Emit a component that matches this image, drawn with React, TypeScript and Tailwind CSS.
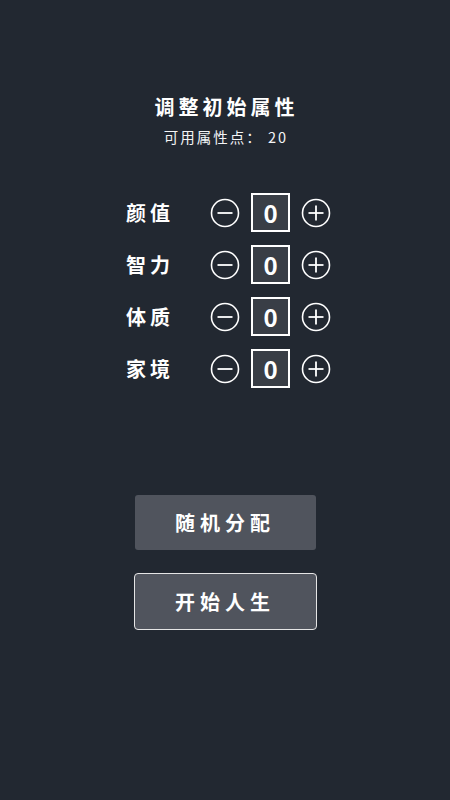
import React, { useState } from 'react';

const FONT = { fontFamily: '"Noto Sans CJK SC", "Noto Sans", sans-serif' };

const MinusIcon = () => (
  <svg width="30" height="30" viewBox="0 0 30 30" fill="none">
    <circle cx="15" cy="15" r="13.5" stroke="white" strokeWidth="1.6" />
    <line x1="7.5" y1="15" x2="22.5" y2="15" stroke="white" strokeWidth="1.8" />
  </svg>
);

const PlusIcon = () => (
  <svg width="30" height="30" viewBox="0 0 30 30" fill="none">
    <circle cx="15" cy="15" r="13.5" stroke="white" strokeWidth="1.6" />
    <line x1="7.5" y1="15" x2="22.5" y2="15" stroke="white" strokeWidth="1.8" />
    <line x1="15" y1="7.5" x2="15" y2="22.5" stroke="white" strokeWidth="1.8" />
  </svg>
);

const attrs = ['颜值', '智力', '体质', '家境'];

export default function App() {
  const [values] = useState([0, 0, 0, 0]);

  return (
    <div className="w-[450px] h-[800px] bg-[#222831] text-white flex flex-col items-center" style={FONT}>
      {/* Header */}
      <h1 className="mt-[93px] pl-[3px] text-[20px] font-bold tracking-[4px] leading-[28px]">调整初始属性</h1>
      <p className="mt-[6px] pl-[2px] text-[14.5px] tracking-[2px] leading-[20px] text-gray-100">可用属性点： 20</p>

      {/* Attributes */}
      <div className="mt-[46px] pl-[6px] flex flex-col gap-[13px]">
        {attrs.map((name, i) => (
          <div key={name} className="flex items-center h-[39px]">
            <span className="w-[85px] pl-[1px] text-[20px] font-bold tracking-[4px]">{name}</span>
            <button className="w-[30px] h-[30px]">
              <MinusIcon />
            </button>
            <div className="ml-[11px] w-[39px] h-[39px] border-2 border-white bg-[#393e46] flex items-center justify-center text-[24px] font-bold">
              {values[i]}
            </div>
            <button className="ml-[11px] w-[30px] h-[30px]">
              <PlusIcon />
            </button>
          </div>
        ))}
      </div>

      {/* Actions */}
      <button className="mt-[107px] w-[181px] h-[55px] rounded-[3px] bg-[#50545d] text-[20px] font-bold tracking-[5px]">
        随机分配
      </button>
      <button className="mt-[23px] w-[183px] h-[57px] rounded-[4px] border border-[#e5e5e5] bg-[#50545d] text-[20px] font-bold tracking-[5px]">
        开始人生
      </button>
    </div>
  );
}
